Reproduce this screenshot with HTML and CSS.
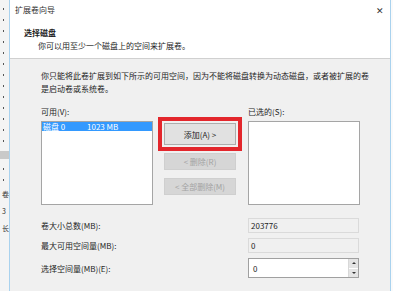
FILE: index.html
```html
<!DOCTYPE html>
<html lang="zh-CN">
<head>
<meta charset="utf-8">
<title>扩展卷向导</title>
<link rel="stylesheet" href="styles.css">
</head>
<body>
<div class="screen">
  <div class="bg-strip">
    <span class="mk"></span><span class="mk"></span><span class="mk"></span><span class="mk"></span>
    <span class="mk"></span><span class="mk"></span><span class="mk"></span><span class="mk"></span>
    <span class="mk"></span><span class="mk"></span><span class="mk"></span><span class="mk"></span>
    <span class="mk"></span><span class="band"></span><span class="mk"></span><span class="mk"></span>
    <span class="glyph">卷</span><span class="glyph">3</span><span class="glyph">长</span>
  </div>
  <div class="dialog">
    <div class="titlebar">
      <span class="title">扩展卷向导</span>
      <span class="close">✕</span>
    </div>
    <div class="header">
      <div class="h-title">选择磁盘</div>
      <div class="h-sub">你可以用至少一个磁盘上的空间来扩展卷。</div>
    </div>
    <div class="content">
      <p class="desc">你只能将此卷扩展到如下所示的可用空间，因为不能将磁盘转换为动态磁盘，或者被扩展的卷<br>是启动卷或系统卷。</p>
      <div class="pick">
        <div class="col">
          <div class="lbl">可用(V):</div>
          <div class="list">
            <div class="row sel"><span class="disk">磁盘 0</span><span>1023 MB</span></div>
          </div>
        </div>
        <div class="btns">
          <div class="hl">
            <button class="btn">添加(A) &gt;</button>
          </div>
          <button class="btn off first">&lt; 删除(R)</button>
          <button class="btn off second">&lt; 全部删除(M)</button>
        </div>
        <div class="col">
          <div class="lbl">已选的(S):</div>
          <div class="list"></div>
        </div>
      </div>
      <div class="fields">
        <div class="flbl">卷大小总数(MB):</div>
        <div class="field ro">203776</div>
        <div class="flbl">最大可用空间量(MB):</div>
        <div class="field ro">0</div>
        <div class="flbl">选择空间量(MB)(E):</div>
        <div class="field spin">
          <span class="val">0</span>
          <span class="spinner">
            <span class="arr up"></span>
            <span class="arr down"></span>
          </span>
        </div>
      </div>
    </div>
  </div>
  <div class="edge"></div>
</div>
</body>
</html>
```

FILE: styles.css
```css
* { box-sizing: border-box; }
html, body {
  margin: 0;
  padding: 0;
  width: 393px;
  height: 291px;
  overflow: hidden;
  background: #f0f0f0;
  font-family: "Noto Sans CJK SC", "Noto Sans", sans-serif;
  font-size: 8px;
  color: #1e1e1e;
}
.screen {
  display: flex;
  width: 393px;
  height: 291px;
}
.bg-strip {
  width: 9px;
  flex: none;
  background: #f4f4f4;
  display: flex;
  flex-direction: column;
  align-items: flex-start;
  padding-top: 8px;
  gap: 9px;
}
.mk {
  display: block;
  width: 1px;
  height: 2px;
  margin-left: 3px;
  background: #555;
}
.band {
  display: block;
  width: 9px;
  height: 8px;
  background: #c9c9c9;
}
.glyph {
  font-size: 7px;
  line-height: 8px;
  color: #333;
  margin-left: 2px;
}
.dialog {
  width: 382px;
  flex: none;
  display: flex;
  flex-direction: column;
  border-left: 1px solid #a9d2ee;
  border-right: 1px solid #a9d2ee;
  background: #f0f0f0;
}
.edge {
  flex: 1;
  background: #fafafa;
}
.titlebar {
  height: 20px;
  background: #fff;
  display: flex;
  align-items: center;
  justify-content: space-between;
  padding: 0 4px 0 5px;
}
.title {
  color: #333;
  line-height: 20px;
}
.close {
  font-size: 9px;
  color: #333;
  width: 12px;
  text-align: center;
}
.header {
  background: #fff;
  padding: 6px 0 6px 14px;
  border-bottom: 1px solid #d0d0d0;
}
.h-title {
  font-weight: bold;
  line-height: 13px;
}
.h-sub {
  line-height: 13px;
  padding-left: 14px;
}
.content {
  padding: 10px 0 0 31px;
}
.desc {
  margin: 0;
  line-height: 13px;
  white-space: nowrap;
}
.pick {
  display: flex;
  margin-top: 10px;
}
.col {
  display: flex;
  flex-direction: column;
  width: 112px;
}
.lbl {
  line-height: 13px;
  height: 16px;
}
.list {
  height: 84px;
  background: #fff;
  border: 1px solid #a5a5a5;
}
.row {
  display: flex;
  height: 9px;
  line-height: 9px;
  padding-left: 1px;
}
.row.sel {
  background: #3399ff;
  color: #fff;
}
.disk {
  width: 44px;
}
.btns {
  width: 84px;
  margin: 0 6px 0 5px;
  padding-top: 12px;
  display: flex;
  flex-direction: column;
  align-items: center;
}
.hl {
  border: 4px solid #e3262c;
  padding: 2px;
  width: 84px;
}
.btn {
  display: block;
  width: 72px;
  height: 22px;
  margin: 0;
  padding: 0;
  font: inherit;
  font-size: 8px;
  color: #222;
  background: #e1e1e1;
  border: 1px solid #adadad;
}
.btn.off {
  height: 17px;
  background: #d6d6d6;
  color: #a3a3a3;
  border-color: #cfcfcf;
}
.btn.first { margin-top: 2px; }
.btn.second { margin-top: 8px; }
.fields {
  display: grid;
  grid-template-columns: 207px 111px;
  grid-template-rows: 15px 15px 20px;
  row-gap: 5px;
  margin-top: 13px;
  align-items: center;
}
.flbl {
  line-height: 13px;
}
.field {
  height: 100%;
  display: flex;
  align-items: center;
  padding-left: 2px;
}
.field.ro {
  background: #f0f0f0;
  border: 1px solid #dadada;
}
.field.spin {
  background: #fff;
  border: 1px solid #a0a0a0;
  padding-left: 4px;
  padding-right: 0;
  justify-content: space-between;
}
.val { line-height: 13px; }
.spinner {
  width: 10px;
  height: 100%;
  display: flex;
  flex-direction: column;
  gap: 1px;
  background: #fff;
  border-left: 1px solid #d8d8d8;
}
.arr {
  flex: 1;
  background: #e4e4e4;
  display: flex;
  align-items: center;
  justify-content: center;
}
.arr::after {
  content: "";
  width: 0;
  height: 0;
  border-left: 2px solid transparent;
  border-right: 2px solid transparent;
}
.arr.up::after { border-bottom: 2px solid #333; }
.arr.down::after { border-top: 2px solid #333; }
```
